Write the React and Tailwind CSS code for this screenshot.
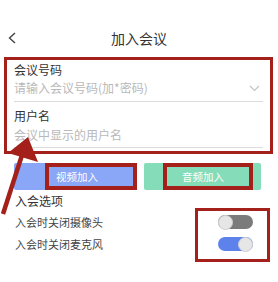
import React from 'react';

const RED = 'border-[#a3201b]';

function Toggle({ on }) {
  return (
    <div className={`w-[35px] h-[14px] rounded-full flex items-center ${on ? 'bg-[#5d82ec] justify-end' : 'bg-[#7b7b7b] justify-start'}`}>
      <div className="w-[15px] h-[15px] rounded-full bg-[#e6e6e6] border border-[#cfcfcf]"></div>
    </div>
  );
}

export default function App() {
  return (
    <div className="relative w-[278px] h-[282px] bg-white overflow-hidden font-['Noto_Sans_CJK_SC',sans-serif] text-[#333]">
      {/* 顶栏 */}
      <header className="h-[57px] pt-[18px] px-[8px] flex items-center relative">
        <svg width="8" height="12" viewBox="0 0 8 12" className="absolute left-[8px] top-[32px]">
          <polyline points="7,1 1.5,6 7,11" fill="none" stroke="#444" strokeWidth="1.4" />
        </svg>
        <h1 className="flex-1 text-center text-[14px] leading-[20px] text-[#333] pl-[0px]">加入会议</h1>
      </header>

      {/* 输入区 */}
      <div className={`ml-[4px] w-[269px] h-[97px] border-[3px] ${RED} pl-[7px] pr-[7px]`}>
        <p className="mt-[3px] text-[12px] leading-[14px] text-[#333]">会议号码</p>
        <div className="mt-[4px] flex items-center justify-between pr-[3px]">
          <span className="text-[12px] leading-[14px] text-[#b9b9b9]">请输入会议号码(加*密码)</span>
          <svg width="11" height="7" viewBox="0 0 11 7">
            <polyline points="1,1 5.5,5.5 10,1" fill="none" stroke="#c4c4c4" strokeWidth="1.2" />
          </svg>
        </div>
        <div className="mt-[6px] border-t border-[#dcdcdc]"></div>
        <p className="mt-[7px] text-[12px] leading-[14px] text-[#333]">用户名</p>
        <p className="mt-[5px] text-[12px] leading-[14px] text-[#b9b9b9]">会议中显示的用户名</p>
        <div className="mt-[5px] border-t border-[#dcdcdc]"></div>
      </div>

      {/* 按钮 */}
      <div className="mt-[9px] pl-[14px] flex gap-[7px]">
        <div className="w-[123px] h-[27px] bg-[#89a6f7] rounded-[2px] flex justify-end">
          <div className={`w-[92px] h-[27px] border-[4px] ${RED} flex items-center pl-[7px] text-[10.5px] text-white`}>视频加入</div>
        </div>
        <div className="w-[117px] h-[27px] bg-[#84dcb8] rounded-[2px] pl-[19px] pr-[8px]">
          <div className={`h-[27px] border-[4px] ${RED} flex items-center justify-center pr-[10px] text-[10.5px] text-white`}>音频加入</div>
        </div>
      </div>

      {/* 入会选项 */}
      <p className="mt-[4px] pl-[15px] text-[12px] leading-[14px] text-[#333]">入会选项</p>
      <div className="flex pl-[15px]">
        <div className="flex-1 text-[11px] leading-[14px] text-[#444]">
          <p className="mt-[7px]">入会时关闭摄像头</p>
          <p className="mt-[8px]">入会时关闭麦克风</p>
        </div>
        <div className={`mr-[8px] w-[75px] h-[54px] border-[3px] ${RED} pl-[20px] pt-[4px] flex flex-col gap-[8px]`}>
          <Toggle on={false} />
          <Toggle on={true} />
        </div>
      </div>

      {/* 红色标注箭头 */}
      <svg width="278" height="282" className="absolute left-0 top-0 pointer-events-none">
        <line x1="3" y1="214" x2="23" y2="152" stroke="#a3201b" strokeWidth="4.5" />
        <polygon points="28,137 38,162 8,153" fill="#a3201b" />
      </svg>
    </div>
  );
}
